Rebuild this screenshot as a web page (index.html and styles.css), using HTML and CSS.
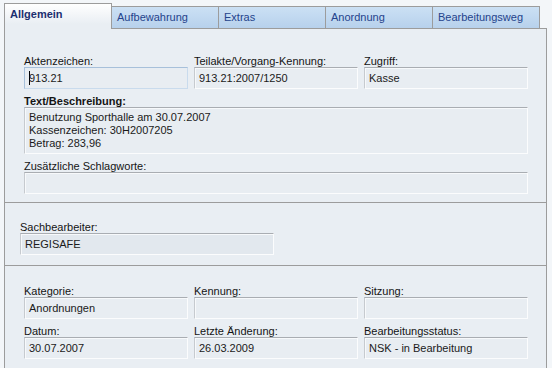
FILE: index.html
```html
<!DOCTYPE html>
<html lang="de">
<head>
  <meta charset="UTF-8" />
  <title>Akte - Allgemein</title>
  <link rel="stylesheet" href="styles.css">
</head>
<body>
  <div class="tabs">
    <div class="tab active">Allgemein</div>
    <div class="tab">Aufbewahrung</div>
    <div class="tab">Extras</div>
    <div class="tab">Anordnung</div>
    <div class="tab">Bearbeitungsweg</div>
  </div>

  <div class="panel">
    <!-- Stammdaten -->
    <div class="group first">
      <div class="row">
        <div class="field">
          <label>Aktenzeichen:</label>
          <div class="box focused"><span class="caret"></span>913.21</div>
        </div>
        <div class="field">
          <label>Teilakte/Vorgang-Kennung:</label>
          <div class="box">913.21:2007/1250</div>
        </div>
        <div class="field">
          <label>Zugriff:</label>
          <div class="box">Kasse</div>
        </div>
      </div>
      <div class="row">
        <div class="field wide">
          <label class="strong">Text/Beschreibung:</label>
          <div class="box multi">Benutzung Sporthalle am 30.07.2007<br>Kassenzeichen: 30H2007205<br>Betrag: 283,96</div>
        </div>
      </div>
      <div class="row">
        <div class="field wide">
          <label>Zusätzliche Schlagworte:</label>
          <div class="box"></div>
        </div>
      </div>
    </div>

    <!-- Bearbeiter -->
    <div class="group second">
      <div class="field">
        <label>Sachbearbeiter:</label>
        <div class="box user">REGISAFE</div>
      </div>
    </div>

    <!-- Status -->
    <div class="group third">
      <div class="row">
        <div class="field">
          <label>Kategorie:</label>
          <div class="box">Anordnungen</div>
        </div>
        <div class="field">
          <label>Kennung:</label>
          <div class="box"></div>
        </div>
        <div class="field">
          <label>Sitzung:</label>
          <div class="box"></div>
        </div>
      </div>
      <div class="row">
        <div class="field">
          <label>Datum:</label>
          <div class="box">30.07.2007</div>
        </div>
        <div class="field">
          <label>Letzte Änderung:</label>
          <div class="box">26.03.2009</div>
        </div>
        <div class="field">
          <label>Bearbeitungsstatus:</label>
          <div class="box">NSK - in Bearbeitung</div>
        </div>
      </div>
    </div>
  </div>
</body>
</html>
```

FILE: styles.css
```css
body {
  margin: 0;
  background: #f3f6f9;
  font-family: 'Liberation Sans', Arial, sans-serif;
  font-size: 11px;
  color: #1a1a1a;
  overflow: hidden;
}
.tabs {
  display: flex;
  align-items: flex-end;
  height: 25px;
  padding: 3px 0 0 4px;
}
.tab {
  box-sizing: border-box;
  width: 107px;
  height: 22px;
  padding-left: 5px;
  line-height: 21px;
  color: #24438c;
  background: linear-gradient(#cbe0f4, #b7d1ec);
  border-top: 1px solid #9c9c9c;
  border-right: 1px solid #9c9c9c;
}
.tab.active {
  position: relative;
  z-index: 1;
  width: 108px;
  height: 26px;
  margin-bottom: -1px;
  line-height: 20px;
  font-weight: bold;
  color: #1c2f70;
  background: linear-gradient(#ffffff, #e9eef3 80%);
  border: 1px solid #9c9c9c;
  border-bottom: none;
}
.panel {
  box-sizing: border-box;
  width: 543px;
  height: 340px;
  margin-left: 4px;
  background: #e9eef3;
  border: 1px solid #9c9c9c;
  border-bottom: none;
}
.group {
  border-bottom: 1px solid #9c9c9c;
}
.group.first {
  padding: 27px 0 8px 19px;
}
.group.second {
  padding: 19px 0 10px 15px;
}
.group.third {
  padding: 20px 0 0 19px;
  border-bottom: none;
}
.row {
  display: grid;
  grid-template-columns: repeat(3, 164px);
  column-gap: 6px;
}
.row + .row {
  margin-top: 7px;
}
.field.wide {
  grid-column: 1 / 4;
}
label {
  display: block;
  height: 11px;
  line-height: 11px;
  color: #141414;
}
label.strong {
  font-weight: bold;
}
.box {
  box-sizing: border-box;
  height: 22px;
  padding-left: 4px;
  line-height: 20px;
  white-space: nowrap;
  background: #e8edf2;
  border: 1px solid;
  border-color: #a9adb2 #fbfcfd #fbfcfd #c6cacf;
  box-shadow: inset 1px 1px 0 #f7f9fb;
}
.box.focused {
  border-color: #a7c0da #c9dbed #c9dbed #a7c0da;
  box-shadow: none;
}
.box.multi {
  height: 47px;
  padding-top: 3px;
  line-height: 13px;
}
.box.user {
  width: 254px;
  background: #e2e8ee;
}
.caret {
  display: inline-block;
  width: 0;
  height: 14px;
  margin-right: -1px;
  vertical-align: -3px;
  border-left: 1px solid #000;
}
```
